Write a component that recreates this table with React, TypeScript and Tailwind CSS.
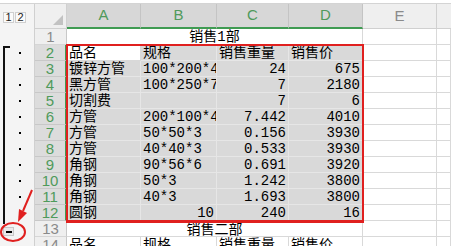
import React from 'react';

const GRID = 'grid grid-cols-[35px_32px_74px_76px_72px_74px_74px_14px]';
const CELL_FONT = "font-['Liberation_Mono','Noto_Sans_CJK_SC',monospace] text-[14px] leading-[16px] text-black";

type Row = [string, string, string, string];

const ROWS: Row[] = [
  ['镀锌方管', '100*200*4', '24', '675'],
  ['黑方管', '100*250*7', '7', '2180'],
  ['切割费', '', '7', '6'],
  ['方管', '200*100*4', '7.442', '4010'],
  ['方管', '50*50*3', '0.156', '3930'],
  ['方管', '40*40*3', '0.533', '3930'],
  ['角钢', '90*56*6', '0.691', '3920'],
  ['角钢', '50*3', '1.242', '3800'],
  ['角钢', '40*3', '1.693', '3800'],
  ['圆钢', '10', '240', '16'],
];

const isNum = (s: string) => /^[0-9.]+$/.test(s);

function Outline({ dot, minus }: { dot?: boolean; minus?: boolean }) {
  return (
    <div className="relative h-4 bg-[#f4f4f4] border-r border-[#d0d0d0]">
      {dot && <div className="absolute left-[19px] top-[7px] w-[2px] h-[2px] bg-black" />}
      {minus && (
        <div className="absolute left-[3px] top-[6px] w-[11px] h-[9px] bg-[#e9e9e9] border border-[#c8c8c8] flex items-center justify-center">
          <div className="w-[6px] h-[2px] bg-black" />
        </div>
      )}
    </div>
  );
}

function RowHead({ n, sel }: { n: number; sel?: boolean }) {
  return (
    <div
      className={
        "h-4 flex items-center justify-center font-['Liberation_Sans',sans-serif] text-[15px] leading-none border-b " +
        (sel
          ? 'bg-[#dcdcdc] text-[#4f9a5b] border-[#c8c8c8] border-r-2 border-r-[#3f9b52]'
          : 'bg-[#efefef] text-[#8a8a8a] border-[#d6d6d6] border-r border-r-[#c8c8c8]')
      }
    >
      {n}
    </div>
  );
}

function Cell({ v, sel, white }: { v: string; sel?: boolean; white?: boolean }) {
  const right = isNum(v) && v !== '';
  return (
    <div
      className={
        'h-4 px-[2px] overflow-hidden whitespace-nowrap border-r border-b ' +
        CELL_FONT +
        (right ? ' text-right' : ' text-left') +
        (sel && !white ? ' bg-[#d9d9d9] border-[#e6e6e6]' : ' bg-white border-[#d9d9d9]')
      }
    >
      {v}
    </div>
  );
}

function Merged({ text, low }: { text: string; low?: boolean }) {
  return (
    <div
      className={
        'col-span-4 h-4 text-center bg-white border-r border-b border-[#d9d9d9] ' +
        CELL_FONT +
        (low ? ' pt-[1px] leading-[15px]' : '')
      }
    >
      {text}
    </div>
  );
}

function Blank() {
  return <div className="h-4 bg-white border-r border-b border-[#d9d9d9]" />;
}

export default function App() {
  return (
    <div className="relative w-[451px] h-[246px] overflow-hidden bg-white">
      <div className="h-1 bg-white border-b border-[#d4d4d4]" />

      {/* column headers */}
      <div className={GRID + ' h-[25px]'}>
        <div className="bg-[#f4f4f4] border-r border-[#d0d0d0] flex items-start gap-[1px] pl-[3px] pt-[8px]">
          {['1', '2'].map((b) => (
            <div
              key={b}
              className="w-[11px] h-[11px] bg-[#fafafa] border border-[#cfcfcf] flex items-center justify-center font-['Liberation_Sans',sans-serif] text-[11px] leading-none text-[#222]"
            >
              {b}
            </div>
          ))}
        </div>
        <div className="relative bg-[#efefef] border-r border-b border-[#d0d0d0]">
          <svg className="absolute right-[3px] bottom-[3px]" width="10" height="10" viewBox="0 0 10 10">
            <path d="M10 0 V10 H0 Z" fill="#c2c2c2" />
          </svg>
        </div>
        {['A', 'B', 'C', 'D'].map((c) => (
          <div
            key={c}
            className="flex items-center justify-center bg-[#d7d7d7] border-r border-[#c4c4c4] border-b-2 border-b-[#3f9b52] font-['Liberation_Sans',sans-serif] text-[15px] text-[#4f9a5b]"
          >
            {c}
          </div>
        ))}
        <div className="flex items-center justify-center bg-[#efefef] border-r border-b border-[#d0d0d0] font-['Liberation_Sans',sans-serif] text-[15px] text-[#8a8a8a]">
          E
        </div>
        <div className="bg-[#efefef] border-b border-[#d0d0d0]" />
      </div>

      {/* body */}
      <div className={GRID}>
        <Outline />
        <RowHead n={1} />
        <Merged text="销售1部" />
        <Blank />
        <Blank />

        <Outline dot />
        <RowHead n={2} sel />
        <Cell v="品名" sel white />
        <Cell v="规格" sel />
        <Cell v="销售重量" sel />
        <Cell v="销售价" sel />
        <Blank />
        <Blank />

        {ROWS.map((r, i) => (
          <React.Fragment key={i}>
            <Outline dot />
            <RowHead n={i + 3} sel />
            {r.map((v, j) => (
              <Cell key={j} v={v} sel />
            ))}
            <Blank />
            <Blank />
          </React.Fragment>
        ))}

        <Outline minus />
        <RowHead n={13} />
        <Merged text="销售二部" low />
        <Blank />
        <Blank />

        <Outline />
        <RowHead n={14} />
        <Cell v="品名" />
        <Cell v="规格" />
        <Cell v="销售重量" />
        <Cell v="销售价" />
        <Blank />
        <Blank />
      </div>

      {/* selection border */}
      <div className="absolute left-[66px] top-[44px] w-[298px] h-[179px] border-2 border-b-[3px] border-[#e0201f] pointer-events-none" />

      {/* outline bracket + annotation */}
      <svg className="absolute left-0 top-0 pointer-events-none" width="60" height="246" viewBox="0 0 60 246">
        <path d="M10 47 H4 V224" fill="none" stroke="#111" strokeWidth="2" />
        <ellipse cx="13" cy="232" rx="12" ry="9" fill="none" stroke="#e0201f" strokeWidth="2" />
        <path d="M32 190 L23 211" stroke="#e0201f" strokeWidth="2" />
        <path d="M18 222 L19 209 L27 213 Z" fill="#e0201f" />
      </svg>
    </div>
  );
}
